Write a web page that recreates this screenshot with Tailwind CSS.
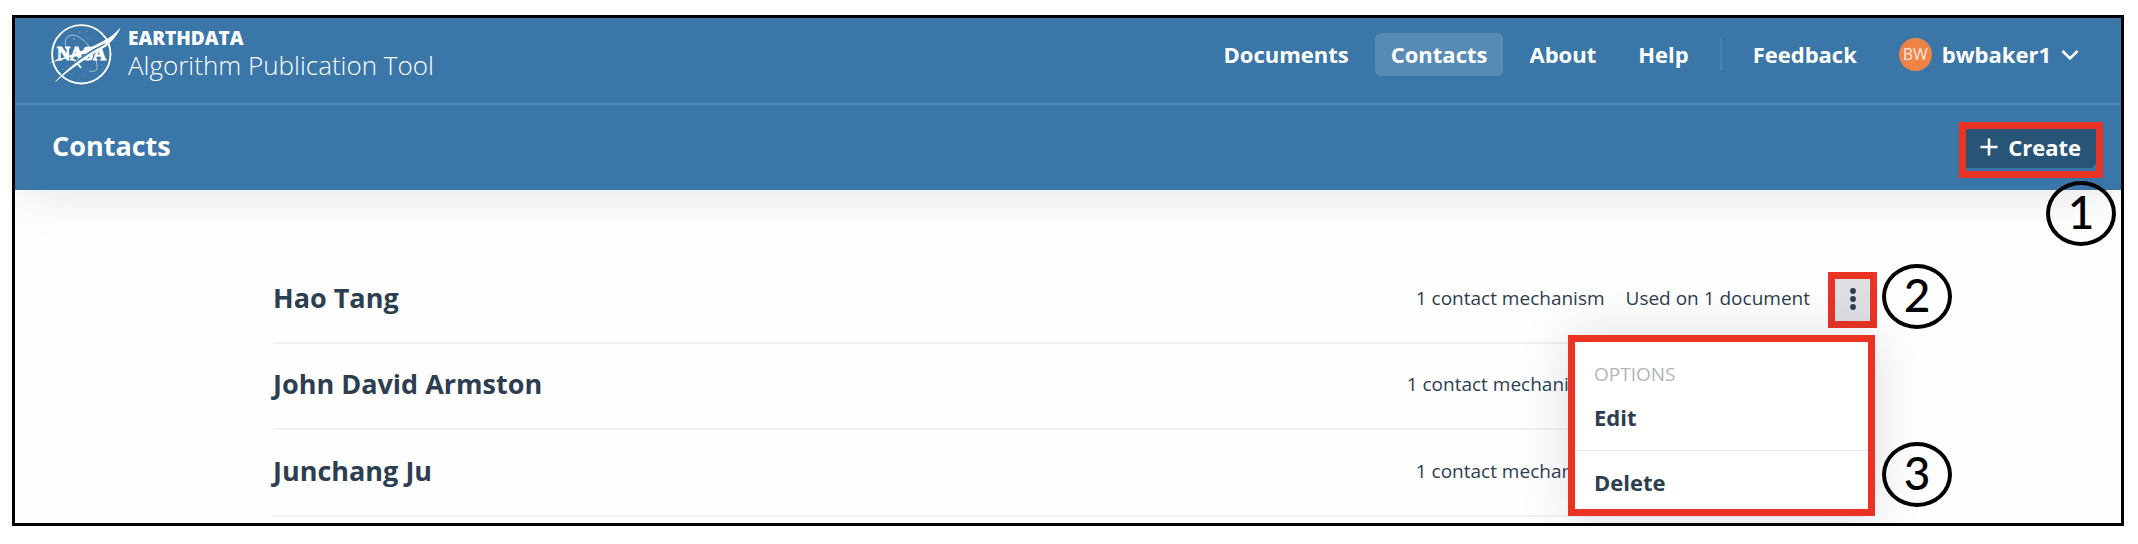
<!DOCTYPE html>
<html lang="en">
<head>
<meta charset="utf-8">
<title>Contacts - Algorithm Publication Tool</title>
<script src="https://cdn.jsdelivr.net/npm/@tailwindcss/browser@4"></script>
</head>
<body class="flex h-screen bg-white pt-[15px] pr-[14px] pb-[18px] pl-[12px] font-['Open_Sans','Noto_Sans',sans-serif] text-[#2c3e50]">
<div class="relative flex flex-1 flex-col overflow-hidden border-3 border-black bg-[#fefefe]">
  <header class="bg-[#3a76a8] text-white shadow-[0_8px_48px_-8px_rgba(0,0,0,0.13)]">
    <div class="flex h-[87px] items-start justify-between border-b-2 border-white/12 pr-[42px] pl-[31px]">
      <a href="#" class="flex items-start gap-[6px] pt-[6px]">
        <svg class="h-[64px] w-[76px]" viewBox="0 0 76 64" fill="none" aria-hidden="true">
          <circle cx="35.3" cy="30.3" r="29.2" stroke="#fff" stroke-width="1.9"/>
          <path d="M20 23C17 14 23 9 31 12C40 16 50 29 51 41C52 47 49 48 43 47" stroke="#fff" stroke-opacity=".7" stroke-width=".8"/>
          <path d="M20 23C22 30 27 38 35 43" stroke="#fff" stroke-opacity=".7" stroke-width=".8"/>
          <path d="M29 36l6 8" stroke="#fff" stroke-width="1.7"/>
          <g fill="#fff" fill-opacity=".6"><circle cx="28" cy="15" r=".8"/><circle cx="34" cy="8" r=".5"/><circle cx="41" cy="7" r=".6"/><circle cx="42" cy="14" r=".5"/><circle cx="38" cy="11" r=".4"/><circle cx="17" cy="45" r=".5"/><circle cx="21" cy="42" r=".5"/><circle cx="26" cy="50" r=".5"/><circle cx="55" cy="41" r=".5"/><circle cx="57" cy="45" r=".5"/><circle cx="38" cy="51" r=".5"/></g>
          <text x="35.5" y="36" text-anchor="middle" font-family="Liberation Serif, serif" font-weight="700" font-size="18" fill="#fff" stroke="#fff" stroke-width="1">NASA</text>
          <path d="M74.500 3.500C71 13 64 20 52 27C51 24 48 22.500 44 24C59 17 67 12 74.500 3.500Z" fill="#fff"/>
          <path d="M1.500 39.500C19 33 40 26 54 19L61 15L61 20C54 25 46 28 40 29.500C25 33 14 36 1.500 39.500Z" fill="#fff"/>
          <path d="M60 19C43 26 24 39 9.500 57.500C23 45 38 34 54 26Z" fill="#3a76a8"/>
          <path d="M61 20C42 29 22 44 9.500 57.500C24 45 41 33 61 21.500Z" fill="#fff" stroke="#fff" stroke-width=".7"/>
        </svg>
        <span class="flex flex-col">
          <strong class="text-[19px] leading-[28px] font-extrabold">EARTHDATA</strong>
          <span class="text-[26px] leading-[26px] font-light">Algorithm Publication Tool</span>
        </span>
      </a>
      <nav class="flex items-center gap-[10px] pt-[15px] text-[22px] leading-[43px] font-bold">
        <a href="#" class="px-[16px]">Documents</a>
        <a href="#" class="rounded-md bg-white/15 px-[16px]">Contacts</a>
        <a href="#" class="px-[16px]">About</a>
        <a href="#" class="px-[16px]">Help</a>
        <span class="mx-[5px] h-[33px] w-[2px] bg-white/8"></span>
        <a href="#" class="px-[16px]">Feedback</a>
        <button type="button" class="flex items-center pl-[16px]">
          <span class="mr-[10px] size-[33px] rounded-full bg-[#ee8444] text-center text-[16px] leading-[33px] font-normal text-white/80">BW</span>
          bwbaker1
          <svg class="ml-[10px] h-[12px] w-[18px]" viewBox="0 0 18 12" fill="none" stroke="#fff" stroke-width="2.600" aria-hidden="true"><path d="M1.500 2L9 9.500L16.500 2"/></svg>
        </button>
      </nav>
    </div>
    <div class="flex h-[85px] items-start justify-between pt-[17px] pr-[18px] pl-[37px]">
      <h1 class="mt-1 text-[27px] leading-[40px] font-bold">Contacts</h1>
      <div class="border-7 border-[#ea3323] pb-[3px]">
        <button type="button" class="flex h-[39px] items-center gap-[10px] rounded-br-md bg-[#285478] pr-[15px] pb-[3px] pl-[14px] text-[22px] font-bold">
          <svg class="size-[18px]" viewBox="0 0 18 18" stroke="#fff" stroke-width="2.600" aria-hidden="true"><path d="M9 .5v17M.5 9h17"/></svg>
          Create
        </button>
      </div>
    </div>
  </header>

  <main class="relative mx-[258px] mt-[67px]">
    <ul class="text-[19px]">
      <li class="flex h-[87px] items-center border-b-2 border-[#eff0f1]">
        <h2 class="flex-1 pb-[3px] text-[27px] font-bold">Hao Tang</h2>
        <span class="mr-[21px] pb-[3px]">1 contact mechanism</span>
        <span class="pb-[3px]">Used on 1 document</span>
        <button type="button" aria-label="Options" class="-mr-[14px] ml-[18px] flex h-[56px] w-[49px] items-center justify-center border-7 border-[#ea3323] bg-[#dddfe3]">
          <svg class="mb-[2px] h-[24px] w-[6px]" viewBox="0 0 6 24" fill="#2c3e50" aria-hidden="true"><circle cx="3" cy="4" r="2.900"/><circle cx="3" cy="12" r="2.900"/><circle cx="3" cy="20" r="2.900"/></svg>
        </button>
      </li>
      <li class="flex h-[86px] items-center border-b-2 border-[#eff0f1]">
        <h2 class="flex-1 pb-[3px] text-[27px] font-bold">John David Armston</h2>
        <span class="mr-[21px] pb-[3px]">1 contact mechanism</span>
        <span class="mr-[53px] pb-[3px]">Used on 2 documents</span>
      </li>
      <li class="flex h-[87px] items-center border-b-2 border-[#eff0f1]">
        <h2 class="flex-1 pb-[3px] text-[27px] font-bold">Junchang Ju</h2>
        <span class="mr-[21px] pb-[3px]">1 contact mechanism</span>
        <span class="mr-[53px] pb-[3px]">Used on 1 document</span>
      </li>
    </ul>
    <div class="absolute top-[78px] -right-[12px] w-[307px] border-7 border-[#ea3323] bg-white pt-[19px] shadow-[0_0_48px_0_rgba(44,62,80,0.16)]">
      <p class="px-[19px] text-[19px] leading-[26px] text-[#b0b5bc]">OPTIONS</p>
      <button type="button" class="block h-[64px] w-full border-b border-[#e6e7e9] px-[19px] pb-[3px] text-left text-[22px] font-bold">Edit</button>
      <button type="button" class="block h-[58px] w-full px-[19px] pt-[4px] text-left text-[22px] font-bold">Delete</button>
    </div>
  </main>

  <!-- Numbered callouts -->
  <div class="absolute top-[163px] right-[5px] flex h-[65px] w-[70px] items-center justify-center rounded-[50%] border-4 border-black pb-[4px] font-[Lato,sans-serif] text-[46px] leading-none font-medium text-black">1</div>
  <div class="absolute top-[246px] right-[169px] flex h-[65px] w-[70px] items-center justify-center rounded-[50%] border-4 border-black pb-[4px] font-[Lato,sans-serif] text-[46px] leading-none font-medium text-black">2</div>
  <div class="absolute top-[424px] right-[169px] flex h-[65px] w-[70px] items-center justify-center rounded-[50%] border-4 border-black pb-[4px] font-[Lato,sans-serif] text-[46px] leading-none font-medium text-black">3</div>
</div>
</body>
</html>
